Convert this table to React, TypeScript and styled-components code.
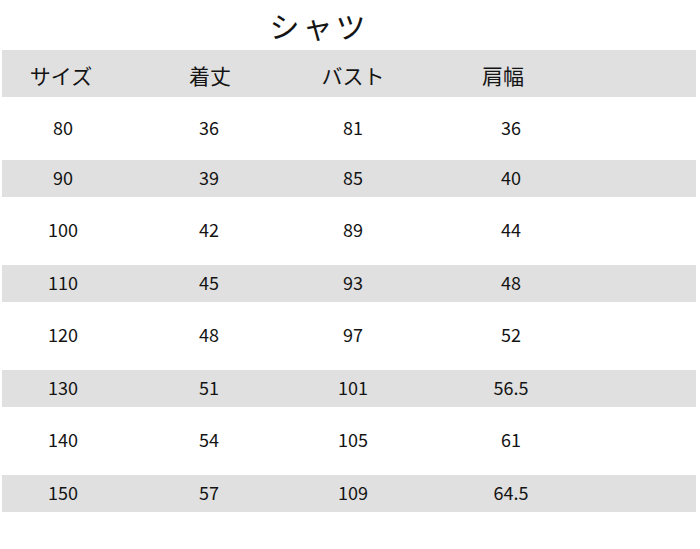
import React from "react";
import styled, { createGlobalStyle } from "styled-components";

const GlobalStyle = createGlobalStyle`
	body {
		margin: 0;
		background: #fff;
		font-family: "Noto Sans CJK JP", "Noto Sans", sans-serif;
		color: #141414;
	}
`;

const Page = styled.div`
	width: 700px;
	height: 549px;
	overflow: hidden;
`;

const Title = styled.h1`
	margin: 0;
	height: 50px;
	display: flex;
	align-items: center;
	justify-content: center;
	padding-right: 62px;
	font-size: 30px;
	font-weight: 400;
	letter-spacing: 3px;
`;

const Table = styled.div`
	margin: 0 4px 0 2px;
	display: flex;
	flex-direction: column;
`;

const Row = styled.div<{ $height: number; $shaded: boolean }>`
	display: grid;
	grid-template-columns: 122px 170px 118px 198px 1fr;
	align-items: center;
	height: ${(p) => p.$height}px;
	background: ${(p) => (p.$shaded ? "#e0e0e0" : "transparent")};
`;

const Cell = styled.div<{ $head?: boolean; $shift?: number }>`
	text-align: center;
	font-size: ${(p) => (p.$head ? 21 : 18)}px;
	transform: translate(${(p) => p.$shift ?? 0}px, ${(p) => (p.$head ? 1 : -2)}px);
`;

const headers = ["サイズ", "着丈", "バスト", "肩幅"];
const headShift = [-2, 1, 0, -8];

const rows = [
	["80", "36", "81", "36"],
	["90", "39", "85", "40"],
	["100", "42", "89", "44"],
	["110", "45", "93", "48"],
	["120", "48", "97", "52"],
	["130", "51", "101", "56.5"],
	["140", "54", "105", "61"],
	["150", "57", "109", "64.5"],
];

export default function App() {
	return (
		<Page>
			<GlobalStyle />
			<Title>シャツ</Title>
			<Table>
				<Row $height={47} $shaded>
					{headers.map((h, i) => (
						<Cell key={h} $head $shift={headShift[i]}>
							{h}
						</Cell>
					))}
				</Row>
				{rows.map((r, i) => {
					const shaded = i % 2 === 1;
					const height = shaded ? 37 : i === 0 ? 63 : 68;
					return (
						<Row key={r[0]} $height={height} $shaded={shaded}>
							{r.map((v, j) => (
								<Cell key={j}>{v}</Cell>
							))}
						</Row>
					);
				})}
			</Table>
		</Page>
	);
}
